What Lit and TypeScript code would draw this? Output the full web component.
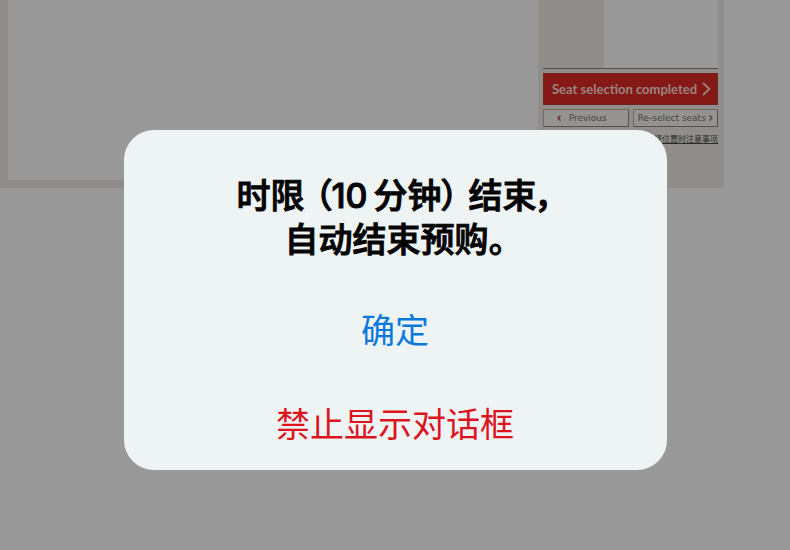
import { LitElement, html, css } from "lit";
import { customElement } from "lit/decorators.js";

@customElement("seat-page")
class SeatPage extends LitElement {
  static styles = css`
    :host {
      display: block;
      font-family: "Liberation Sans", "Noto Sans CJK SC", sans-serif;
    }
    .frame {
      display: grid;
      grid-template-columns: 1fr 180px;
      box-sizing: border-box;
      height: 188px;
      margin-right: 66px;
      padding: 0 6px 8px 8px;
      background: #f0ece8;
    }
    .map {
      background: #ffffff;
    }
    .side {
      display: flex;
      flex-direction: column;
      gap: 4px;
      padding-left: 5px;
    }
    .list {
      display: flex;
      justify-content: flex-end;
      flex: 0 0 68px;
      border-bottom: 1px solid #888484;
    }
    .cell {
      width: 114px;
      background: #ffffff;
    }
    button {
      box-sizing: border-box;
      margin: 0;
      font-family: inherit;
      white-space: nowrap;
    }
    .done {
      display: flex;
      align-items: center;
      justify-content: space-between;
      height: 32px;
      padding: 0 6px 0 8px;
      border: 1px solid #c23a34;
      background: #dc2a24;
      color: #ffdcd4;
      font-family: "Lato", sans-serif;
      font-size: 13px;
      font-weight: 700;
    }
    .pair {
      display: grid;
      grid-template-columns: 1fr 1fr;
      gap: 4px;
    }
    .small {
      display: flex;
      align-items: center;
      justify-content: center;
      gap: 8px;
      height: 18px;
      padding: 0 8px 0 0;
      border: 1px solid #b4b0ae;
      border-right-color: #8c8886;
      border-bottom-color: #8c8886;
      background: #f7f5f4;
      color: #77726f;
      font-family: "DejaVu Sans", sans-serif;
      font-size: 9px;
    }
    .tight {
      gap: 3px;
      padding: 0;
    }
    .note {
      align-self: flex-end;
      margin-top: 2px;
      color: #4c4846;
      font-size: 8px;
      line-height: 14px;
    }
  `;

  render() {
    return html`
      <div class="frame">
        <div class="map"></div>
        <div class="side">
          <div class="list"><div class="cell"></div></div>
          <button class="done">
            Seat selection completed
            <svg width="9" height="14" viewBox="0 0 9 14" fill="none" stroke="currentColor" stroke-width="1.8" aria-hidden="true">
              <path d="M1 1 L7.5 7 L1 13" />
            </svg>
          </button>
          <div class="pair">
            <button class="small">
              <svg width="4" height="6" viewBox="0 0 4 6" fill="none" stroke="#a83c36" stroke-width="1.3" aria-hidden="true">
                <path d="M3.5 0.5 L1 3 L3.5 5.5" />
              </svg>
              Previous
            </button>
            <button class="small tight">
              Re-select seats
              <svg width="4" height="6" viewBox="0 0 4 6" fill="none" stroke="currentColor" stroke-width="1.3" aria-hidden="true">
                <path d="M0.5 0.5 L3 3 L0.5 5.5" />
              </svg>
            </button>
          </div>
          <a class="note" href="#notes">选择位置时注意事项</a>
        </div>
      </div>
    `;
  }
}

@customElement("alert-dialog")
class AlertDialog extends LitElement {
  static styles = css`
    :host {
      position: absolute;
      inset: 0;
      display: flex;
      align-items: flex-start;
      justify-content: center;
      padding: 130px 16px 0;
      background: rgba(0, 0, 0, 0.4);
      font-family: "Inter", "Noto Sans CJK SC", sans-serif;
    }
    .box {
      display: flex;
      flex-direction: column;
      align-items: center;
      box-sizing: border-box;
      width: 100%;
      max-width: 543px;
      padding: 44px 16px 20px;
      border-radius: 30px;
      background: #eef3f4;
    }
    .title {
      margin: 0 0 44px;
      color: #050505;
      font-size: 34px;
      font-weight: 500;
      line-height: 44px;
      text-align: center;
      font-feature-settings: "palt";
      -webkit-text-stroke: 1px #050505;
    }
    .open,
    .rest {
      margin-left: 10px;
    }
    .unit {
      margin-left: 6px;
    }
    .action {
      margin: 0 0 44px;
      padding: 0 16px;
      border: 0;
      background: none;
      color: #0a78dc;
      font-family: inherit;
      font-size: 34px;
      line-height: 50px;
    }
    .danger {
      margin: 0;
      color: #dc1420;
    }
  `;

  render() {
    return html`
      <div class="box" role="alertdialog" aria-labelledby="title">
        <h1 class="title" id="title">
          时限<span class="open">（10</span><span class="unit">分钟）</span><span class="rest">结束，</span><br />自动结束预购。
        </h1>
        <button class="action">确定</button>
        <button class="action danger">禁止显示对话框</button>
      </div>
    `;
  }
}

@customElement("app-root")
class AppRoot extends LitElement {
  static styles = css`
    :host {
      position: relative;
      display: block;
      min-height: 100vh;
      overflow: hidden;
      background: #ffffff;
    }
  `;

  render() {
    return html`
      <seat-page></seat-page>
      <alert-dialog></alert-dialog>
    `;
  }
}
